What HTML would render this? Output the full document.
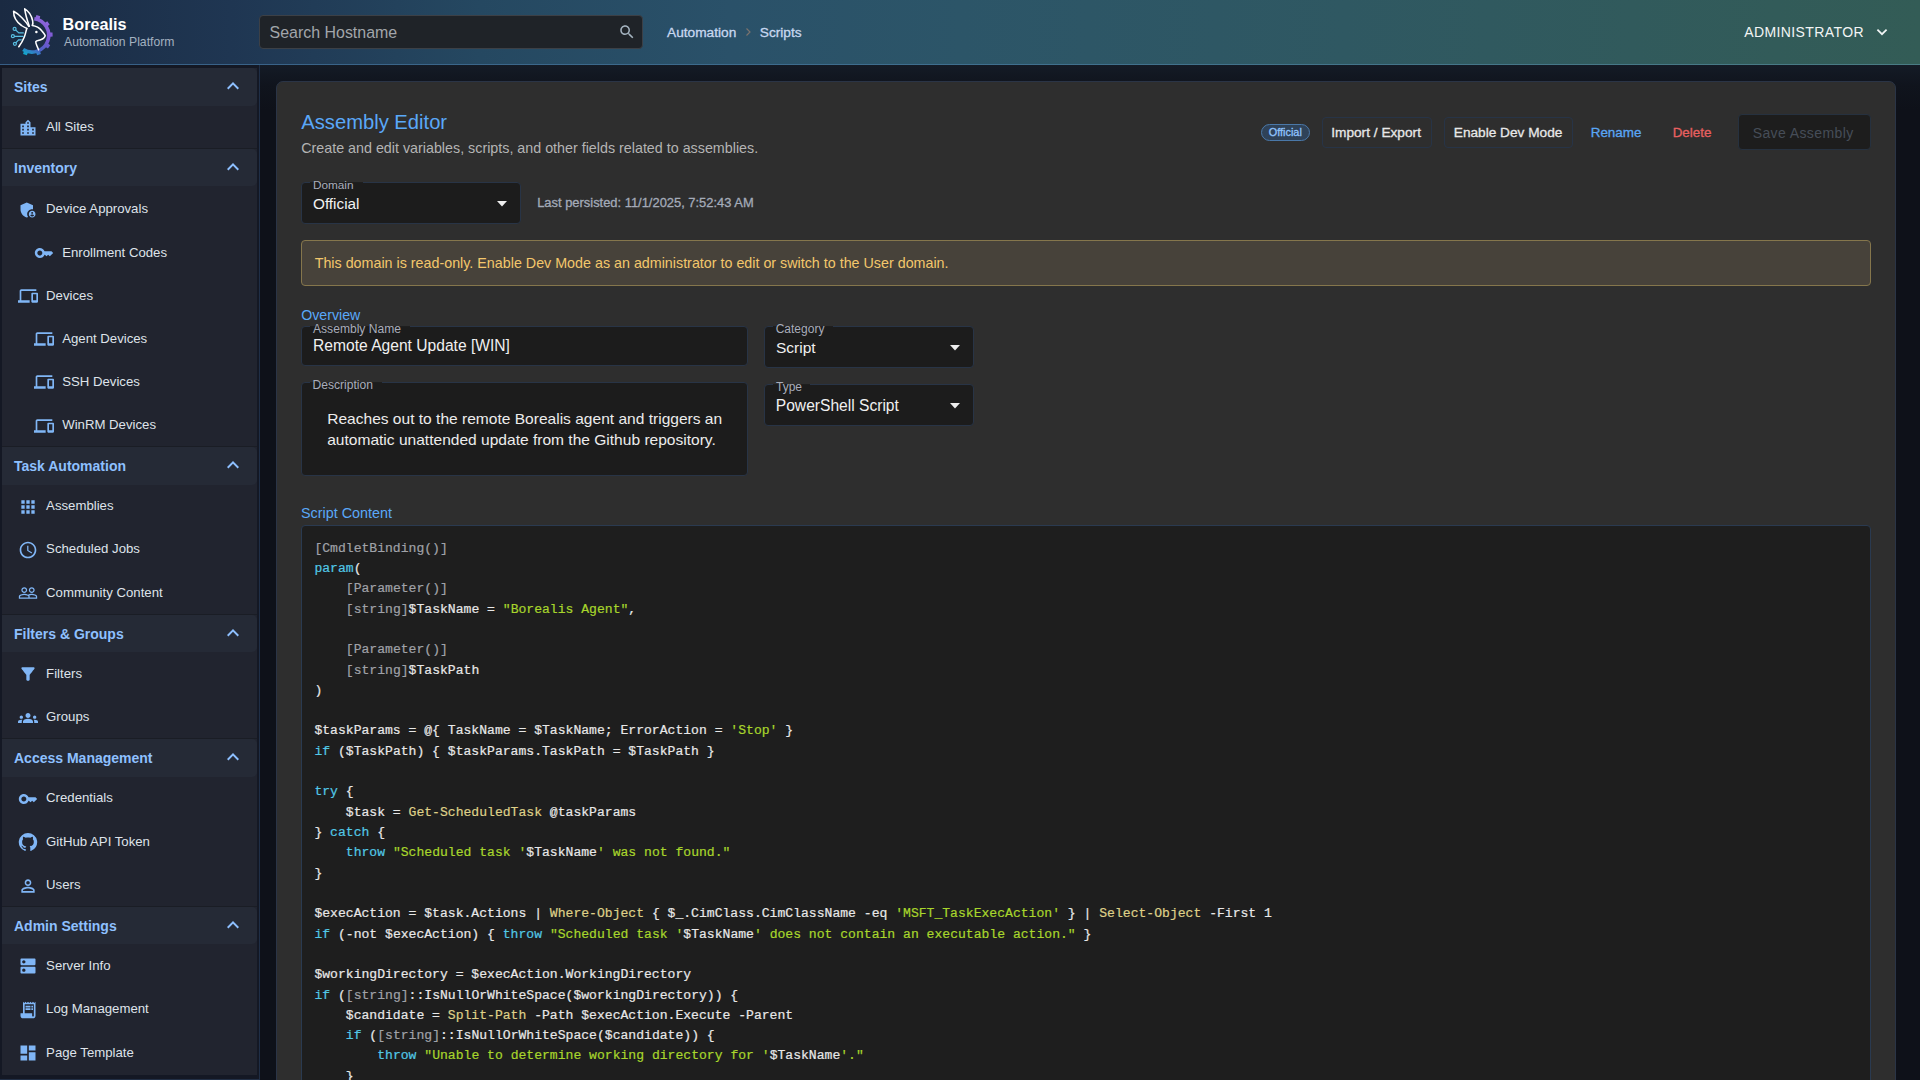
<!DOCTYPE html><html><head><meta charset="utf-8"><title>Borealis - Assembly Editor</title><style>
*{box-sizing:border-box;margin:0;padding:0}
html,body{width:1920px;height:1080px;overflow:hidden;background:#0e1119;font-family:"Liberation Sans",sans-serif;}
.abs{position:absolute}
.c{position:absolute;white-space:nowrap}
pre{font-family:"Liberation Mono",monospace;}
</style></head><body>
<div class="abs" style="left:260px;top:65px;width:1660px;height:1015px;background:linear-gradient(180deg,#141b26 0px,#10141d 20px,#0e1119 45px)"></div>
<div class="abs" style="left:0;top:0;width:1920px;height:64px;background:linear-gradient(90deg,#1a2a42 0%,#1f3652 12%,#254861 25%,#2a5169 38%,#2c5568 50%,#2f5862 70%,#335c56 100%)"></div>
<div class="abs" style="left:0;top:64px;width:1920px;height:1px;background:linear-gradient(90deg,#375e86 0%,#3f6f8f 50%,#4a7c84 100%)"></div>
<svg class="abs" style="left:5px;top:4px" width="52" height="56" viewBox="0 0 52 56">
<defs><linearGradient id="lg" gradientUnits="userSpaceOnUse" x1="40" y1="14" x2="20" y2="50"><stop offset="0" stop-color="#9068dc"/><stop offset="0.45" stop-color="#7656d2"/><stop offset="0.75" stop-color="#4a62c4"/><stop offset="1" stop-color="#12a8cc"/></linearGradient></defs>
<g fill="url(#lg)"><path d="M29.32 14.76 A16.7 16.7 0 1 1 18.15 45.46" fill="none" stroke="url(#lg)" stroke-width="3.6"/><path d="M30.07 14.74 L34.25 16.10 L35.25 12.32 L31.48 11.10z M39.01 19.49 L41.66 23.01 L44.64 20.48 L42.26 17.32z M43.61 28.52 L43.77 32.92 L47.66 32.56 L47.52 28.60z M42.08 38.81 L39.61 42.46 L42.97 44.46 L45.19 41.18z M34.78 46.24 L30.64 47.75 L32.19 51.33 L35.91 49.98z M23.36 47.75 L19.22 46.24 L18.09 49.98 L21.81 51.33z"/></g>
<g fill="none" stroke="#ffffff" stroke-width="1.55" stroke-linecap="round" stroke-linejoin="round">
<path d="M23.8 22.4 C21 17.5 14 10 8.6 7.3 C8.5 12.5 11.5 18 16.5 21.5 C18.5 23 20.5 23.8 21.8 24.4"/>
<path d="M24.3 22.2 C22.5 17 20.5 11 19.7 4.8 C23.5 7 26.5 11.5 27.6 16.5 C28.1 18.8 28 20.5 27.2 21.5 C30.5 22 34 23.3 36.5 26.5 C38.3 28.6 39.8 30.5 40.2 31.8 C39.5 34 37.8 35.2 35 35.9 C33 36.4 31.3 36.6 30.8 37.6 C30.6 39 31.6 41 32.2 42.5 C32.8 44 33.3 45 33.6 45.8"/>
<path d="M21.8 24.4 C21 27 20.3 30.5 19.3 33 C18 36.2 15.8 40 13.8 42.8"/>
</g>
<circle cx="31.4" cy="28" r="1.25" fill="#ffffff"/>
<g fill="none" stroke="#58bfe2" stroke-width="1.2" stroke-linecap="round"><circle cx="9.6" cy="24.9" r="1.5"/><circle cx="7.9" cy="32.2" r="1.5"/><circle cx="9.9" cy="39.8" r="1.5"/>
<path d="M10.8 26.1 L13.8 28.9 L18.3 28.9 M9.4 32.3 L18.2 32.3 M11 38.6 L13.6 35.8 L16.3 35.8"/></g>
</svg>
<div class="c" style="left:62.60px;top:23.99px;font-size:16.2px;color:#ffffff;line-height:0;font-weight:bold;">Borealis</div>
<div class="c" style="left:64.00px;top:41.57px;font-size:12.2px;color:#a3b1c0;line-height:0;">Automation Platform</div>
<div class="abs" style="left:259.00px;top:15.00px;width:384.00px;height:34.00px;background:#1f2328;border-radius:4px;border:1px solid #3c4046;"></div>
<div class="c" style="left:269.60px;top:33.07px;font-size:15.95px;color:#a2a6ab;line-height:0;">Search Hostname</div>
<svg class="abs" style="left:617.75px;top:23.25px" width="18" height="18" viewBox="0 0 24 24"><path fill="#a5b4c0" d="M15.5 14h-.79l-.28-.27C15.41 12.59 16 11.11 16 9.5 16 5.91 13.09 3 9.5 3S3 5.91 3 9.5 5.91 16 9.5 16c1.61 0 3.09-.59 4.23-1.57l.27.28v.79l5 4.99L20.49 19zm-6 0C7.01 14 5 11.99 5 9.5S7.01 5 9.5 5 14 7.01 14 9.5 11.99 14 9.5 14"/></svg>
<div class="c" style="left:667.00px;top:32.75px;font-size:13.7px;color:#c8d8f0;line-height:0;-webkit-text-stroke:0.3px #c8d8f0;">Automation</div>
<svg class="abs" style="left:744px;top:27px" width="9" height="10" viewBox="0 0 9 10"><path d="M2.5 1.5 L6 5 L2.5 8.5" fill="none" stroke="#7c736e" stroke-width="1.15"/></svg>
<div class="c" style="left:759.80px;top:32.75px;font-size:13.7px;color:#c8d8f0;line-height:0;-webkit-text-stroke:0.3px #c8d8f0;">Scripts</div>
<div class="c" style="left:1744.20px;top:31.85px;font-size:14px;color:#f2f5f5;line-height:0;letter-spacing:0.4px;">ADMINISTRATOR</div>
<svg class="abs" style="left:1875px;top:27px" width="14" height="10" viewBox="0 0 14 10"><path d="M2.4 2.6 L7 7.2 L11.6 2.6" fill="none" stroke="#f0f4f4" stroke-width="1.75"/></svg>
<div class="abs" style="left:0;top:65px;width:260px;height:1015px;background:#141824"></div>
<div class="abs" style="left:0;top:1079px;width:260px;height:1px;background:#222f45"></div>
<div class="abs" style="left:259px;top:65px;width:1px;height:1015px;background:#1f2e46"></div>
<div class="abs" style="left:2px;top:68px;width:255px;height:1006.8px;background:#21242f"></div>
<div class="abs" style="left:2px;top:68.00px;width:255px;height:37.5px;background:#252a36;border-radius:0 5px 5px 0"></div>
<div class="c" style="left:14.00px;top:86.95px;font-size:14px;color:#8ec0ff;line-height:0;font-weight:bold;">Sites</div>
<svg class="abs" style="left:221px;top:73.80px" width="24" height="24" viewBox="0 0 24 24"><path fill="#8ec0ff" d="m12 8-6 6 1.41 1.41L12 10.83l4.59 4.58L18 14z"/></svg>
<svg class="abs" style="left:18.00px;top:117.92px" width="20" height="20" viewBox="0 0 24 24"><path fill="#80b6f6" d="M15 11V5l-3-3-3 3v2H3v14h18V11zm-8 8H5v-2h2zm0-4H5v-2h2zm0-4H5V9h2zm6 8h-2v-2h2zm0-4h-2v-2h2zm0-4h-2V9h2zm0-4h-2V5h2zm6 12h-2v-2h2zm0-4h-2v-2h2z"/></svg>
<div class="c" style="left:46.10px;top:127.43px;font-size:13.2px;color:#dfe3ea;line-height:0;">All Sites</div>
<div class="abs" style="left:2px;top:147.93px;width:255px;height:1px;background:#1a1d25"></div>
<div class="abs" style="left:2px;top:148.93px;width:255px;height:37.5px;background:#252a36;border-radius:0 5px 5px 0"></div>
<div class="c" style="left:14.00px;top:167.88px;font-size:14px;color:#8ec0ff;line-height:0;font-weight:bold;">Inventory</div>
<svg class="abs" style="left:221px;top:154.73px" width="24" height="24" viewBox="0 0 24 24"><path fill="#8ec0ff" d="m12 8-6 6 1.41 1.41L12 10.83l4.59 4.58L18 14z"/></svg>
<svg class="abs" style="left:18.00px;top:199.55px" width="20" height="20" viewBox="0 0 24 24"><path fill="#80b6f6" d="M17 11c.34 0 .67.04 1 .09V6.27L10.5 3 3 6.27v4.91c0 4.54 3.2 8.79 7.5 9.82.55-.13 1.08-.32 1.6-.55-.69-.98-1.1-2.17-1.1-3.45 0-3.31 2.69-6 6-6M17 13c-2.21 0-4 1.79-4 4s1.79 4 4 4 4-1.79 4-4-1.79-4-4-4m0 1.38c.62 0 1.12.51 1.12 1.12s-.51 1.12-1.12 1.12-1.12-.51-1.12-1.12.5-1.12 1.12-1.12m0 5.37c-.93 0-1.74-.46-2.24-1.17.05-.72 1.51-1.08 2.24-1.08s2.19.36 2.24 1.08c-.5.71-1.31 1.17-2.24 1.17"/></svg>
<div class="c" style="left:46.10px;top:209.06px;font-size:13.2px;color:#dfe3ea;line-height:0;">Device Approvals</div>
<svg class="abs" style="left:34.00px;top:243.18px" width="20" height="20" viewBox="0 0 24 24"><path fill="#80b6f6" d="M21 10h-8.35C11.83 7.67 9.61 6 7 6c-3.31 0-6 2.69-6 6s2.69 6 6 6c2.61 0 4.83-1.67 5.65-4H13l2 2 2-2 2 2 4-4.04zM7 15c-1.65 0-3-1.35-3-3s1.35-3 3-3 3 1.35 3 3-1.35 3-3 3"/></svg>
<div class="c" style="left:62.20px;top:252.69px;font-size:13.2px;color:#dfe3ea;line-height:0;">Enrollment Codes</div>
<svg class="abs" style="left:18.00px;top:286.11px" width="20" height="20" viewBox="0 0 24 24"><path fill="#80b6f6" d="M4 6h18V4H4c-1.1 0-2 .9-2 2v11H0v3h14v-3H4zm19 2h-6c-.55 0-1 .45-1 1v10c0 .55.45 1 1 1h6c.55 0 1-.45 1-1V9c0-.55-.45-1-1-1m-1 9h-4v-7h4z"/></svg>
<div class="c" style="left:46.10px;top:295.62px;font-size:13.2px;color:#dfe3ea;line-height:0;">Devices</div>
<svg class="abs" style="left:34.00px;top:329.24px" width="20" height="20" viewBox="0 0 24 24"><path fill="#80b6f6" d="M4 6h18V4H4c-1.1 0-2 .9-2 2v11H0v3h14v-3H4zm19 2h-6c-.55 0-1 .45-1 1v10c0 .55.45 1 1 1h6c.55 0 1-.45 1-1V9c0-.55-.45-1-1-1m-1 9h-4v-7h4z"/></svg>
<div class="c" style="left:62.20px;top:338.75px;font-size:13.2px;color:#dfe3ea;line-height:0;">Agent Devices</div>
<svg class="abs" style="left:34.00px;top:372.17px" width="20" height="20" viewBox="0 0 24 24"><path fill="#80b6f6" d="M4 6h18V4H4c-1.1 0-2 .9-2 2v11H0v3h14v-3H4zm19 2h-6c-.55 0-1 .45-1 1v10c0 .55.45 1 1 1h6c.55 0 1-.45 1-1V9c0-.55-.45-1-1-1m-1 9h-4v-7h4z"/></svg>
<div class="c" style="left:62.20px;top:381.68px;font-size:13.2px;color:#dfe3ea;line-height:0;">SSH Devices</div>
<svg class="abs" style="left:34.00px;top:415.60px" width="20" height="20" viewBox="0 0 24 24"><path fill="#80b6f6" d="M4 6h18V4H4c-1.1 0-2 .9-2 2v11H0v3h14v-3H4zm19 2h-6c-.55 0-1 .45-1 1v10c0 .55.45 1 1 1h6c.55 0 1-.45 1-1V9c0-.55-.45-1-1-1m-1 9h-4v-7h4z"/></svg>
<div class="c" style="left:62.20px;top:425.11px;font-size:13.2px;color:#dfe3ea;line-height:0;">WinRM Devices</div>
<div class="abs" style="left:2px;top:446.01px;width:255px;height:1px;background:#1a1d25"></div>
<div class="abs" style="left:2px;top:447.01px;width:255px;height:37.5px;background:#252a36;border-radius:0 5px 5px 0"></div>
<div class="c" style="left:14.00px;top:465.96px;font-size:14px;color:#8ec0ff;line-height:0;font-weight:bold;">Task Automation</div>
<svg class="abs" style="left:221px;top:452.81px" width="24" height="24" viewBox="0 0 24 24"><path fill="#8ec0ff" d="m12 8-6 6 1.41 1.41L12 10.83l4.59 4.58L18 14z"/></svg>
<svg class="abs" style="left:18.00px;top:496.53px" width="20" height="20" viewBox="0 0 24 24"><path fill="#80b6f6" d="M4 8h4V4H4zm6 12h4v-4h-4zm-6 0h4v-4H4zm0-6h4v-4H4zm6 0h4v-4h-4zm6-10v4h4V4zm-6 4h4V4h-4zm6 6h4v-4h-4zm0 6h4v-4h-4z"/></svg>
<div class="c" style="left:46.10px;top:506.04px;font-size:13.2px;color:#dfe3ea;line-height:0;">Assemblies</div>
<svg class="abs" style="left:18.00px;top:539.96px" width="20" height="20" viewBox="0 0 24 24"><path fill="#80b6f6" d="M11.99 2C6.47 2 2 6.48 2 12s4.47 10 9.99 10C17.52 22 22 17.52 22 12S17.52 2 11.99 2M12 20c-4.42 0-8-3.58-8-8s3.58-8 8-8 8 3.58 8 8-3.58 8-8 8m.5-13H11v6l5.25 3.15.75-1.23-4.5-2.67z"/></svg>
<div class="c" style="left:46.10px;top:549.47px;font-size:13.2px;color:#dfe3ea;line-height:0;">Scheduled Jobs</div>
<svg class="abs" style="left:18.00px;top:583.38px" width="20" height="20" viewBox="0 0 24 24"><path fill="#80b6f6" d="M16.5 13c-1.2 0-3.07.34-4.5 1-1.43-.67-3.3-1-4.5-1C5.33 13 1 14.08 1 16.25V19h22v-2.75c0-2.17-4.33-3.25-6.5-3.25m-4 4.5h-10v-1.25c0-.54 2.56-1.75 5-1.75s5 1.21 5 1.75zm9 0H14v-1.25c0-.46-.2-.86-.52-1.22.88-.3 1.96-.53 3.02-.53 2.44 0 5 1.21 5 1.75zM7.5 12c1.93 0 3.5-1.57 3.5-3.5S9.43 5 7.5 5 4 6.57 4 8.5 5.57 12 7.5 12m0-5.5c1.1 0 2 .9 2 2s-.9 2-2 2-2-.9-2-2 .9-2 2-2m9 5.5c1.93 0 3.5-1.57 3.5-3.5S18.43 5 16.5 5 13 6.57 13 8.5s1.57 3.5 3.5 3.5m0-5.5c1.1 0 2 .9 2 2s-.9 2-2 2-2-.9-2-2 .9-2 2-2"/></svg>
<div class="c" style="left:46.10px;top:592.90px;font-size:13.2px;color:#dfe3ea;line-height:0;">Community Content</div>
<div class="abs" style="left:2px;top:613.80px;width:255px;height:1px;background:#1a1d25"></div>
<div class="abs" style="left:2px;top:614.80px;width:255px;height:37.5px;background:#252a36;border-radius:0 5px 5px 0"></div>
<div class="c" style="left:14.00px;top:633.75px;font-size:14px;color:#8ec0ff;line-height:0;font-weight:bold;">Filters &amp; Groups</div>
<svg class="abs" style="left:221px;top:620.60px" width="24" height="24" viewBox="0 0 24 24"><path fill="#8ec0ff" d="m12 8-6 6 1.41 1.41L12 10.83l4.59 4.58L18 14z"/></svg>
<svg class="abs" style="left:18.00px;top:664.31px" width="20" height="20" viewBox="0 0 24 24"><path fill="#80b6f6" d="M4.25 5.61C6.27 8.2 10 13 10 13v6c0 .55.45 1 1 1h2c.55 0 1-.45 1-1v-6s3.72-4.8 5.74-7.39c.51-.66.04-1.61-.79-1.61H5.04c-.83 0-1.3.95-.79 1.61"/></svg>
<div class="c" style="left:46.10px;top:673.83px;font-size:13.2px;color:#dfe3ea;line-height:0;">Filters</div>
<svg class="abs" style="left:18.00px;top:707.74px" width="20" height="20" viewBox="0 0 24 24"><path fill="#80b6f6" d="M12 12.75c1.63 0 3.07.39 4.24.9 1.08.48 1.76 1.56 1.76 2.73V18H6v-1.61c0-1.18.68-2.26 1.76-2.73 1.17-.52 2.61-.91 4.24-.91M4 13c1.1 0 2-.9 2-2s-.9-2-2-2-2 .9-2 2 .9 2 2 2m1.13 1.1c-.37-.06-.74-.1-1.13-.1-.99 0-1.93.21-2.78.58C.48 14.9 0 15.62 0 16.43V18h4.5v-1.61c0-.83.23-1.61.63-2.29M20 13c1.1 0 2-.9 2-2s-.9-2-2-2-2 .9-2 2 .9 2 2 2m4 3.43c0-.81-.48-1.53-1.22-1.85-.85-.37-1.79-.58-2.78-.58-.39 0-.76.04-1.13.1.4.68.63 1.46.63 2.29V18H24zM12 6c1.66 0 3 1.34 3 3s-1.34 3-3 3-3-1.34-3-3 1.34-3 3-3"/></svg>
<div class="c" style="left:46.10px;top:717.26px;font-size:13.2px;color:#dfe3ea;line-height:0;">Groups</div>
<div class="abs" style="left:2px;top:738.16px;width:255px;height:1px;background:#1a1d25"></div>
<div class="abs" style="left:2px;top:739.16px;width:255px;height:37.5px;background:#252a36;border-radius:0 5px 5px 0"></div>
<div class="c" style="left:14.00px;top:758.11px;font-size:14px;color:#8ec0ff;line-height:0;font-weight:bold;">Access Management</div>
<svg class="abs" style="left:221px;top:744.96px" width="24" height="24" viewBox="0 0 24 24"><path fill="#8ec0ff" d="m12 8-6 6 1.41 1.41L12 10.83l4.59 4.58L18 14z"/></svg>
<svg class="abs" style="left:18.00px;top:788.67px" width="20" height="20" viewBox="0 0 24 24"><path fill="#80b6f6" d="M21 10h-8.35C11.83 7.67 9.61 6 7 6c-3.31 0-6 2.69-6 6s2.69 6 6 6c2.61 0 4.83-1.67 5.65-4H13l2 2 2-2 2 2 4-4.04zM7 15c-1.65 0-3-1.35-3-3s1.35-3 3-3 3 1.35 3 3-1.35 3-3 3"/></svg>
<div class="c" style="left:46.10px;top:798.19px;font-size:13.2px;color:#dfe3ea;line-height:0;">Credentials</div>
<svg class="abs" style="left:18.00px;top:832.10px" width="20" height="20" viewBox="0 0 24 24"><path fill="#80b6f6" d="M12 1.27a11 11 0 0 0-3.48 21.46c.55.09.73-.28.73-.55v-1.84c-3.03.64-3.67-1.46-3.67-1.46-.55-1.29-1.28-1.65-1.28-1.65-.92-.65.1-.65.1-.65 1.1 0 1.73 1.1 1.73 1.1.92 1.65 2.57 1.2 3.21.92a2 2 0 0 1 .64-1.47c-2.47-.27-5.04-1.19-5.04-5.5 0-1.1.46-2.1 1.2-2.84a3.76 3.76 0 0 1 0-2.93s.91-.28 3.11 1.1c1.8-.49 3.7-.49 5.5 0 2.1-1.38 3.02-1.1 3.02-1.1a3.76 3.76 0 0 1 0 2.93c.83.74 1.2 1.74 1.2 2.94 0 4.2-2.66 5.13-5.04 5.38.45.37.82.92.82 2.02v3.03c0 .27.1.64.73.55A11 11 0 0 0 12 1.27"/></svg>
<div class="c" style="left:46.10px;top:841.62px;font-size:13.2px;color:#dfe3ea;line-height:0;">GitHub API Token</div>
<svg class="abs" style="left:18.00px;top:875.53px" width="20" height="20" viewBox="0 0 24 24"><path fill="#80b6f6" d="M12 5.9c1.16 0 2.1.94 2.1 2.1s-.94 2.1-2.1 2.1S9.9 9.16 9.9 8s.94-2.1 2.1-2.1m0 9c2.97 0 6.1 1.46 6.1 2.1v1.1H5.9V17c0-.64 3.13-2.1 6.1-2.1M12 4C9.79 4 8 5.79 8 8s1.79 4 4 4 4-1.79 4-4-1.79-4-4-4m0 9c-2.67 0-8 1.34-8 4v3h16v-3c0-2.66-5.33-4-8-4"/></svg>
<div class="c" style="left:46.10px;top:885.05px;font-size:13.2px;color:#dfe3ea;line-height:0;">Users</div>
<div class="abs" style="left:2px;top:905.95px;width:255px;height:1px;background:#1a1d25"></div>
<div class="abs" style="left:2px;top:906.95px;width:255px;height:37.5px;background:#252a36;border-radius:0 5px 5px 0"></div>
<div class="c" style="left:14.00px;top:925.90px;font-size:14px;color:#8ec0ff;line-height:0;font-weight:bold;">Admin Settings</div>
<svg class="abs" style="left:221px;top:912.75px" width="24" height="24" viewBox="0 0 24 24"><path fill="#8ec0ff" d="m12 8-6 6 1.41 1.41L12 10.83l4.59 4.58L18 14z"/></svg>
<svg class="abs" style="left:18.00px;top:956.46px" width="20" height="20" viewBox="0 0 24 24"><path fill="#80b6f6" d="M20 13H4c-.55 0-1 .45-1 1v6c0 .55.45 1 1 1h16c.55 0 1-.45 1-1v-6c0-.55-.45-1-1-1M7 19c-1.1 0-2-.9-2-2s.9-2 2-2 2 .9 2 2-.9 2-2 2M20 3H4c-.55 0-1 .45-1 1v6c0 .55.45 1 1 1h16c.55 0 1-.45 1-1V4c0-.55-.45-1-1-1M7 9c-1.1 0-2-.9-2-2s.9-2 2-2 2 .9 2 2-.9 2-2 2"/></svg>
<div class="c" style="left:46.10px;top:965.98px;font-size:13.2px;color:#dfe3ea;line-height:0;">Server Info</div>
<svg class="abs" style="left:18.00px;top:999.89px" width="20" height="20" viewBox="0 0 24 24"><path fill="#80b6f6" d="M19.5 3.5 18 2l-1.5 1.5L15 2l-1.5 1.5L12 2l-1.5 1.5L9 2 7.5 3.5 6 2v14H3v3c0 1.66 1.34 3 3 3h12c1.66 0 3-1.34 3-3V2zM19 19c0 .55-.45 1-1 1s-1-.45-1-1v-3H8V5h11zM9 7h6v2H9zm7 0h2v2h-2zm-7 3h6v2H9zm7 0h2v2h-2z"/></svg>
<div class="c" style="left:46.10px;top:1009.41px;font-size:13.2px;color:#dfe3ea;line-height:0;">Log Management</div>
<svg class="abs" style="left:18.00px;top:1043.32px" width="20" height="20" viewBox="0 0 24 24"><path fill="#80b6f6" d="M3 13h8V3H3zm0 8h8v-6H3zm10 0h8V11h-8zm0-18v6h8V3z"/></svg>
<div class="c" style="left:46.10px;top:1052.84px;font-size:13.2px;color:#dfe3ea;line-height:0;">Page Template</div>
<div class="abs" style="left:276px;top:81px;width:1620px;height:1100px;background:#2e2e2e;border:1px solid #2a3446;border-radius:7px"></div>
<div class="c" style="left:301.25px;top:122.00px;font-size:20.2px;color:#5aa8f8;line-height:0;">Assembly Editor</div>
<div class="c" style="left:301.20px;top:147.55px;font-size:14.3px;color:#b4b4b4;line-height:0;">Create and edit variables, scripts, and other fields related to assemblies.</div>
<div class="abs" style="left:1261.00px;top:124.00px;width:49.00px;height:17.00px;background:#2f4258;border-radius:9px;border:1px solid #4a78a8;"></div>
<div class="c" style="left:1268.75px;top:132.22px;font-size:10.9px;color:#90c4ff;line-height:0;-webkit-text-stroke:0.3px #90c4ff;">Official</div>
<div class="abs" style="left:1322.00px;top:117.00px;width:110.00px;height:31.00px;background:transparent;border-radius:4px;border:1px solid #273447;"></div>
<div class="c" style="left:1331.20px;top:132.85px;font-size:13.7px;color:#e8e8e8;line-height:0;-webkit-text-stroke:0.3px #e8e8e8;">Import / Export</div>
<div class="abs" style="left:1444.00px;top:117.00px;width:129.00px;height:31.00px;background:transparent;border-radius:4px;border:1px solid #273447;"></div>
<div class="c" style="left:1453.80px;top:132.87px;font-size:13.66px;color:#e8e8e8;line-height:0;-webkit-text-stroke:0.3px #e8e8e8;">Enable Dev Mode</div>
<div class="c" style="left:1590.70px;top:132.94px;font-size:13.45px;color:#5aa6f5;line-height:0;-webkit-text-stroke:0.3px #5aa6f5;">Rename</div>
<div class="c" style="left:1672.70px;top:132.96px;font-size:13.4px;color:#e86060;line-height:0;-webkit-text-stroke:0.3px #e86060;">Delete</div>
<div class="abs" style="left:1738.00px;top:114.00px;width:133.00px;height:36.00px;background:#1d1d1d;border-radius:4px;border:1px solid #26313f;"></div>
<div class="c" style="left:1752.70px;top:132.75px;font-size:14px;color:#464d58;line-height:0;letter-spacing:0.4px;">Save Assembly</div>
<div class="abs" style="left:301.00px;top:182.00px;width:220.00px;height:42.00px;background:#1c1c1c;border-radius:4px;border:1px solid #283446;"></div>
<div class="abs" style="left:310.00px;top:182.00px;width:53.00px;height:1px;background:#1e1e1e"></div>
<div class="c" style="left:312.90px;top:184.91px;font-size:11.8px;color:#a9adbb;line-height:0;">Domain</div>
<div class="c" style="left:313.00px;top:203.70px;font-size:15.3px;color:#f2f2f2;line-height:0;">Official</div>
<svg class="abs" style="left:497.00px;top:200.60px" width="10" height="6" viewBox="0 0 10 6"><path d="M0 0 L10 0 L5 5.5z" fill="#eeeeee"/></svg>
<div class="c" style="left:537.20px;top:202.72px;font-size:12.92px;color:#a4abb9;line-height:0;-webkit-text-stroke:0.3px #a4abb9;">Last persisted: 11/1/2025, 7:52:43 AM</div>
<div class="abs" style="left:301.00px;top:240.00px;width:1570.00px;height:46.00px;background:#47423a;border-radius:4px;border:1px solid #85764c;"></div>
<div class="c" style="left:314.70px;top:262.80px;font-size:14.3px;color:#f3c76c;line-height:0;">This domain is read-only. Enable Dev Mode as an administrator to edit or switch to the User domain.</div>
<div class="c" style="left:301.20px;top:314.83px;font-size:14.2px;color:#5aa8f8;line-height:0;">Overview</div>
<div class="abs" style="left:301.00px;top:326.00px;width:447.00px;height:40.00px;background:#1c1c1c;border-radius:4px;border:1px solid #283446;"></div>
<div class="abs" style="left:310.00px;top:326.00px;width:100.00px;height:1px;background:#1e1e1e"></div>
<div class="c" style="left:313.00px;top:328.91px;font-size:12.1px;color:#a9adbb;line-height:0;">Assembly Name</div>
<div class="c" style="left:313.00px;top:346.49px;font-size:15.62px;color:#f0f0f0;line-height:0;">Remote Agent Update [WIN]</div>
<div class="abs" style="left:764.00px;top:326.00px;width:210.00px;height:42.00px;background:#1c1c1c;border-radius:4px;border:1px solid #283446;"></div>
<div class="abs" style="left:773.00px;top:326.00px;width:60.00px;height:1px;background:#1e1e1e"></div>
<div class="c" style="left:775.70px;top:329.04px;font-size:12px;color:#a9adbb;line-height:0;">Category</div>
<div class="c" style="left:776.00px;top:347.73px;font-size:15.5px;color:#f0f0f0;line-height:0;">Script</div>
<svg class="abs" style="left:950.00px;top:345.00px" width="10" height="6" viewBox="0 0 10 6"><path d="M0 0 L10 0 L5 5.5z" fill="#eeeeee"/></svg>
<div class="abs" style="left:301.00px;top:382.00px;width:447.00px;height:94.00px;background:#1c1c1c;border-radius:4px;border:1px solid #283446;"></div>
<div class="abs" style="left:310.00px;top:382.00px;width:72.00px;height:1px;background:#1e1e1e"></div>
<div class="c" style="left:312.50px;top:385.21px;font-size:12.1px;color:#a9adbb;line-height:0;">Description</div>
<div class="c" style="left:327.20px;top:418.91px;font-size:15.56px;color:#ececec;line-height:0;">Reaches out to the remote Borealis agent and triggers an</div>
<div class="c" style="left:327.20px;top:439.81px;font-size:15.56px;color:#ececec;line-height:0;">automatic unattended update from the Github repository.</div>
<div class="abs" style="left:764.00px;top:384.00px;width:210.00px;height:42.00px;background:#1c1c1c;border-radius:4px;border:1px solid #283446;"></div>
<div class="abs" style="left:773.00px;top:384.00px;width:37.00px;height:1px;background:#1e1e1e"></div>
<div class="c" style="left:776.00px;top:386.54px;font-size:12px;color:#a9adbb;line-height:0;">Type</div>
<div class="c" style="left:775.80px;top:405.59px;font-size:15.6px;color:#f0f0f0;line-height:0;">PowerShell Script</div>
<svg class="abs" style="left:950.00px;top:403.40px" width="10" height="6" viewBox="0 0 10 6"><path d="M0 0 L10 0 L5 5.5z" fill="#eeeeee"/></svg>
<div class="c" style="left:301.00px;top:512.93px;font-size:14.35px;color:#5aa8f8;line-height:0;">Script Content</div>
<div class="abs" style="left:301.00px;top:525.00px;width:1570.00px;height:675.00px;background:#1e1e1e;border-radius:4px;border:1px solid #2a3a50;"></div>
<style>
#code{position:absolute;left:314.4px;top:538.64px;font-family:"Liberation Mono",monospace;font-size:13.095px;line-height:20.31px;color:#e8e8e8;white-space:pre;margin:0;-webkit-text-stroke:0.2px currentColor}
#code .g{color:#a0a2a8} #code .k{color:#52c8e6} #code .s{color:#a8d62c} #code .y{color:#dfd088}
</style>
<pre id="code"><span class="g">[CmdletBinding()]</span>
<span class="k">param</span>(
    <span class="g">[Parameter()]</span>
    <span class="g">[string]</span>$TaskName = <span class="s">"Borealis Agent"</span>,

    <span class="g">[Parameter()]</span>
    <span class="g">[string]</span>$TaskPath
)

$taskParams = @{ TaskName = $TaskName; ErrorAction = <span class="s">'Stop'</span> }
<span class="k">if</span> ($TaskPath) { $taskParams.TaskPath = $TaskPath }

<span class="k">try</span> {
    $task = <span class="y">Get-ScheduledTask</span> @taskParams
} <span class="k">catch</span> {
    <span class="k">throw</span> <span class="s">"Scheduled task '</span>$TaskName<span class="s">' was not found."</span>
}

$execAction = $task.Actions | <span class="y">Where-Object</span> { $_.CimClass.CimClassName -eq <span class="s">'MSFT_TaskExecAction'</span> } | <span class="y">Select-Object</span> -First 1
<span class="k">if</span> (-not $execAction) { <span class="k">throw</span> <span class="s">"Scheduled task '</span>$TaskName<span class="s">' does not contain an executable action."</span> }

$workingDirectory = $execAction.WorkingDirectory
<span class="k">if</span> (<span class="g">[string]</span>::IsNullOrWhiteSpace($workingDirectory)) {
    $candidate = <span class="y">Split-Path</span> -Path $execAction.Execute -Parent
    <span class="k">if</span> (<span class="g">[string]</span>::IsNullOrWhiteSpace($candidate)) {
        <span class="k">throw</span> <span class="s">"Unable to determine working directory for '</span>$TaskName<span class="s">'."</span>
    }
}</pre>
</body></html>
